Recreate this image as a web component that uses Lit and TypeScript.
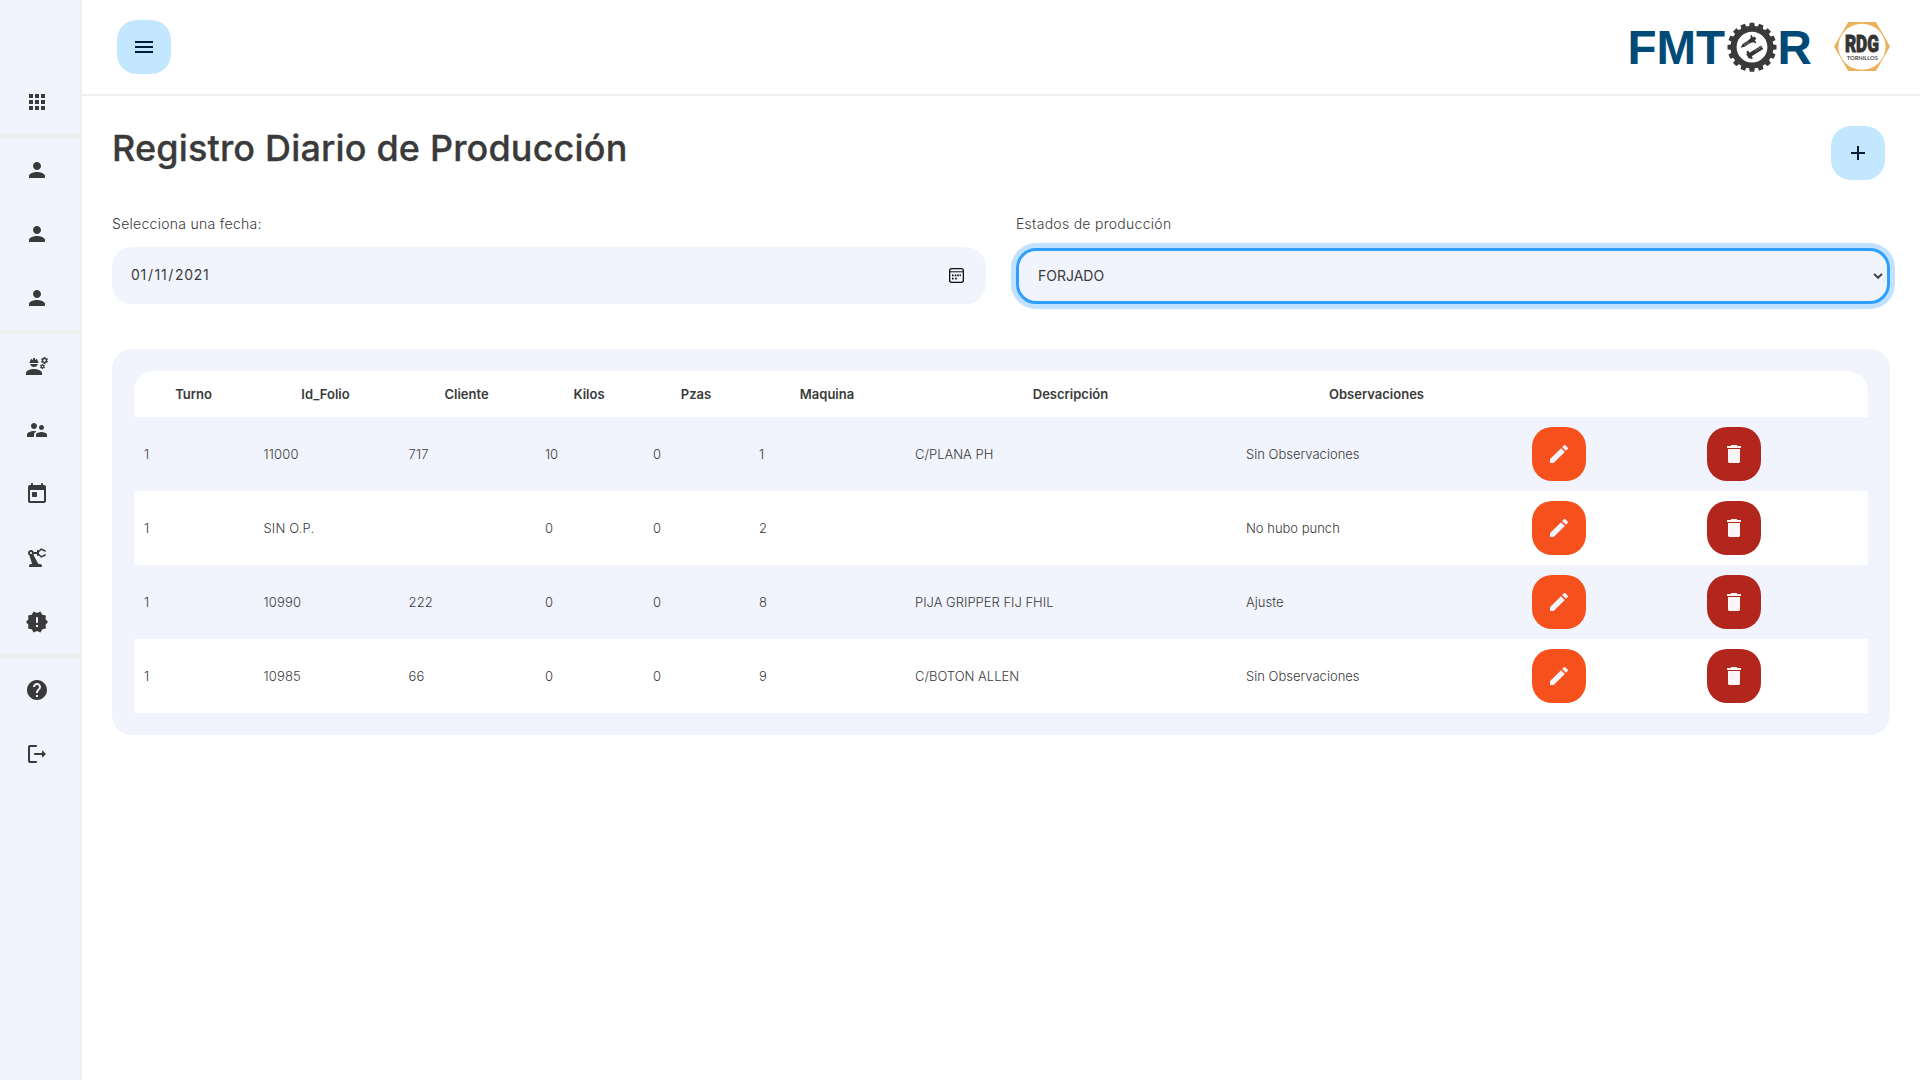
import { LitElement, html, svg, css } from "lit";
import { customElement } from "lit/decorators.js";

const ICONS: Record<string, string> = {
  apps: "M4 8h4V4H4v4zm6 12h4v-4h-4v4zm-6 0h4v-4H4v4zm0-6h4v-4H4v4zm6 0h4v-4h-4v4zm6-10v4h4V4h-4zm-6 4h4V4h-4v4zm6 6h4v-4h-4v4zm0 6h4v-4h-4v4z",
  person:
    "M12 12c2.21 0 4-1.79 4-4s-1.79-4-4-4-4 1.79-4 4 1.79 4 4 4zm0 2c-2.67 0-8 1.34-8 4v1.4c0 .4.2.6.6.6h14.8c.4 0 .6-.2.6-.6V18c0-2.66-5.33-4-8-4z",
  engineering:
    "M9,15c-2.67,0-8,1.34-8,4v2h16v-2C17,16.34,11.67,15,9,15z M22.1,6.84c0.01-0.11,0.02-0.22,0.02-0.34c0-0.12-0.01-0.23-0.03-0.34l0.74-0.58c0.07-0.05,0.08-0.15,0.04-0.22l-0.7-1.21c-0.04-0.08-0.14-0.1-0.21-0.08L21.1,4.42c-0.18-0.14-0.38-0.25-0.59-0.34l-0.13-0.93C20.36,3.06,20.28,3,20.2,3h-1.4c-0.09,0-0.16,0.06-0.17,0.15L18.5,4.08c-0.21,0.09-0.41,0.21-0.59,0.34l-0.87-0.35c-0.08-0.03-0.17,0-0.21,0.08l-0.7,1.21c-0.04,0.08-0.03,0.17,0.04,0.22l0.74,0.58c-0.02,0.11-0.03,0.23-0.03,0.34c0,0.11,0.01,0.23,0.03,0.34l-0.74,0.58c-0.07,0.05-0.08,0.15-0.04,0.22l0.7,1.21c0.04,0.08,0.14,0.1,0.21,0.08l0.87-0.35c0.18,0.14,0.38,0.25,0.59,0.34l0.13,0.93C18.64,9.94,18.71,10,18.8,10h1.4c0.09,0,0.16-0.06,0.17-0.15l0.13-0.93c0.21-0.09,0.41-0.21,0.59-0.34l0.87,0.35c0.08,0.03,0.17,0,0.21-0.08l0.7-1.21c0.04-0.08,0.03-0.17-0.04-0.22L22.1,6.84z M19.5,7.75c-0.69,0-1.25-0.56-1.25-1.25s0.56-1.25,1.25-1.25s1.25,0.56,1.25,1.25S20.19,7.75,19.5,7.75z M19.92,11.68l-0.5-0.87c-0.03-0.06-0.1-0.08-0.15-0.06l-0.62,0.25c-0.13-0.1-0.27-0.18-0.42-0.24l-0.09-0.66C18.12,10.04,18.06,10,18,10h-1c-0.06,0-0.11,0.04-0.12,0.11l-0.09,0.66c-0.15,0.06-0.29,0.15-0.42,0.24l-0.62-0.25c-0.06-0.02-0.12,0-0.15,0.06l-0.5,0.87c-0.03,0.06-0.02,0.12,0.03,0.16l0.53,0.41c-0.01,0.08-0.02,0.16-0.02,0.24c0,0.08,0.01,0.17,0.02,0.24l-0.53,0.41c-0.05,0.04-0.06,0.11-0.03,0.16l0.5,0.87c0.03,0.06,0.1,0.08,0.15,0.06l0.62-0.25c0.13,0.1,0.27,0.18,0.42,0.24l0.09,0.66c0.01,0.07,0.06,0.11,0.12,0.11h1c0.06,0,0.12-0.04,0.12-0.11l0.09-0.66c0.15-0.06,0.29-0.15,0.42-0.24l0.62,0.25c0.06,0.02,0.12,0,0.15-0.06l0.5-0.87c0.03-0.06,0.02-0.12-0.03-0.16l-0.52-0.41c0.01-0.08,0.02-0.16,0.02-0.24c0-0.08-0.01-0.17-0.02-0.24l0.53-0.41C19.93,11.81,19.94,11.74,19.92,11.68z M17.5,13.33c-0.46,0-0.83-0.37-0.83-0.83c0-0.46,0.37-0.83,0.83-0.83c0.46,0,0.83,0.37,0.83,0.83C18.33,12.96,17.96,13.33,17.5,13.33z M4.74,9h8.53c0.27,0,0.49-0.22,0.49-0.49V8.49c0-0.27-0.22-0.49-0.49-0.49H13c0-1.48-0.81-2.75-2-3.45V5.5C11,5.78,10.78,6,10.5,6S10,5.78,10,5.5V4.14C9.68,4.06,9.35,4,9,4S8.32,4.06,8,4.14V5.5C8,5.78,7.78,6,7.5,6S7,5.78,7,5.5V4.55C5.81,5.25,5,6.52,5,8H4.74C4.47,8,4.25,8.22,4.25,8.49v0.03C4.25,8.78,4.47,9,4.74,9z M9,13c1.86,0,3.41-1.28,3.86-3H5.14C5.59,11.72,7.14,13,9,13z",
  supervisor:
    "M16.5 12c1.38 0 2.49-1.12 2.49-2.5S17.88 7 16.5 7C15.12 7 14 8.12 14 9.5s1.12 2.5 2.5 2.5zM9 11c1.66 0 2.99-1.34 2.99-3S10.66 5 9 5C7.34 5 6 6.34 6 8s1.34 3 3 3zm7.5 3c-1.83 0-5.5.92-5.5 2.75V19h11v-2.25c0-1.83-3.67-2.75-5.5-2.75zM9 13c-2.33 0-7 1.17-7 3.5V19h7v-2.25c0-.85.33-2.34 2.37-3.47C10.5 13.1 9.66 13 9 13z",
  today:
    "M19 3h-1V2c0-.55-.45-1-1-1s-1 .45-1 1v1H8V2c0-.55-.45-1-1-1s-1 .45-1 1v1H5c-1.11 0-1.99.9-1.99 2L3 19c0 1.1.89 2 2 2h14c1.1 0 2-.9 2-2V5c0-1.1-.9-2-2-2zm0 16H5V8h14v11zM8 10h3c.55 0 1 .45 1 1v3c0 .55-.45 1-1 1H8c-.55 0-1-.45-1-1v-3c0-.55.45-1 1-1z",
  robot:
    "M19.93,8.35l-3.6,1.68L14,7.7V6.3l2.33-2.33l3.6,1.68c0.38,0.18,0.82,0.01,1-0.36c0.18-0.38,0.01-0.82-0.36-1l-3.92-1.83c-0.38-0.18-0.83-0.1-1.13,0.2L13.78,4.4C13.6,4.16,13.32,4,13,4c-0.55,0-1,0.45-1,1v1H8.82C8.4,4.84,7.3,4,6,4C4.34,4,3,5.34,3,7c0,1.1,0.6,2.05,1.48,2.58L7.08,18H6c-1.1,0-2,0.9-2,2c0,0.55,0.45,1,1,1h11c0.55,0,1-0.45,1-1c0-1.1-0.9-2-2-2h-1.62L8.41,8.77C8.58,8.53,8.72,8.28,8.82,8H12v1c0,0.55,0.45,1,1,1c0.32,0,0.6-0.16,0.78-0.4l1.74,1.74c0.3,0.3,0.75,0.38,1.13,0.2l3.92-1.83c0.38-0.18,0.54-0.62,0.36-1C20.75,8.34,20.31,8.17,19.93,8.35z M6,8C5.45,8,5,7.55,5,7c0-0.55,0.45-1,1-1s1,0.45,1,1C7,7.55,6.55,8,6,8z",
  alert:
    "M23 12l-2.44-2.78.34-3.68-3.61-.82-1.89-3.18L12 3 8.6 1.54 6.71 4.72l-3.61.81.34 3.68L1 12l2.44 2.78-.34 3.69 3.61.82 1.89 3.18L12 21l3.4 1.46 1.89-3.18 3.61-.82-.34-3.68L23 12zm-10 5h-2v-2h2v2zm0-5c0 .55-.45 1-1 1s-1-.45-1-1V8c0-.55.45-1 1-1s1 .45 1 1v4z",
  help: "M12 2C6.48 2 2 6.48 2 12s4.48 10 10 10 10-4.48 10-10S17.52 2 12 2zm1 17h-2v-2h2v2zm2.07-7.75l-.9.92C13.45 12.9 13 13.5 13 15h-2v-.5c0-1.1.45-2.1 1.17-2.83l1.24-1.26c.37-.36.59-.86.59-1.41 0-1.1-.9-2-2-2s-2 .9-2 2H8c0-2.21 1.79-4 4-4s4 1.79 4 4c0 .88-.36 1.68-.93 2.25z",
  logout:
    "M5 5h6c.55 0 1-.45 1-1s-.45-1-1-1H5c-1.1 0-2 .9-2 2v14c0 1.1.9 2 2 2h6c.55 0 1-.45 1-1s-.45-1-1-1H5V5zM20.65 11.65l-2.79-2.79c-.32-.32-.86-.1-.86.35V11h-7c-.55 0-1 .45-1 1s.45 1 1 1h7v1.79c0 .45.54.67.85.35l2.79-2.79c.2-.19.2-.51.01-.7z",
  menu: "M3 18h18v-2H3v2zm0-5h18v-2H3v2zm0-7v2h18V6H3z",
  add: "M19 13h-6v6h-2v-6H5v-2h6V5h2v6h6v2z",
  edit: "M3 17.46v3.04c0 .28.22.5.5.5h3.04c.13 0 .26-.05.35-.15L17.81 9.94l-3.75-3.75L3.15 17.1c-.1.1-.15.22-.15.36zM20.71 7.04c.39-.39.39-1.02 0-1.41l-2.34-2.34c-.39-.39-1.02-.39-1.41 0l-1.83 1.83 3.75 3.75 1.83-1.83z",
  trash:
    "M6 19.6c0 .9.5 1.4 1.4 1.4h9.2c.9 0 1.4-.5 1.4-1.4V7H6v12.6zM19 4h-3.5l-1-1h-5l-1 1H5v2h14V4z",
};

const icon = (name: string) =>
  html`<svg class="icon" viewBox="0 0 24 24"><path d=${ICONS[name]} /></svg>`;

const NAV: string[][] = [
  ["apps"],
  ["person", "person", "person"],
  ["engineering", "supervisor", "today", "robot", "alert"],
  ["help", "logout"],
];

const COLUMNS: [string, number][] = [
  ["Turno", 119],
  ["Id_Folio", 145],
  ["Cliente", 137],
  ["Kilos", 108],
  ["Pzas", 106],
  ["Maquina", 156],
  ["Descripción", 331],
  ["Observaciones", 281],
  ["", 175],
  ["", 176],
];

const ROWS: string[][] = [
  ["1", "11000", "717", "10", "0", "1", "C/PLANA PH", "Sin Observaciones"],
  ["1", "SIN O.P.", "", "0", "0", "2", "", "No hubo punch"],
  ["1", "10990", "222", "0", "0", "8", "PIJA GRIPPER FIJ FHIL", "Ajuste"],
  ["1", "10985", "66", "0", "0", "9", "C/BOTON ALLEN", "Sin Observaciones"],
];

@customElement("brand-logos")
class BrandLogos extends LitElement {
  static styles = css`
    :host { display: block; width: 264px; height: 54px; }
    svg { display: block; }
    .fm { font: bold 47.5px "Liberation Sans", Arial, sans-serif; fill: #004a77; }
    .rdg { font: 900 24.5px Roboto, "Liberation Sans", sans-serif; fill: #333; stroke: #333; stroke-width: 0.9px; }
    .tor { font: 600 6.3px Lato, sans-serif; fill: #333; }
  `;
  render() {
    const teeth = Array.from({ length: 16 }, (_, i) => i * 22.5);
    return html`<svg width="264" height="54" viewBox="1628 20 264 54">
      <text class="fm" x="1627.4" y="64.3">FMT</text>
      <text class="fm" x="1777.4" y="64.3">R</text>
      <g transform="translate(1752 47.2)">
        ${teeth.map(
          (a) => svg`<path d="M-2.9 -20 L-2.3 -24.5 H2.3 L2.9 -20Z" fill="#3a3a3a" transform="rotate(${a})" />`
        )}
        <circle r="18.4" fill="none" stroke="#3a3a3a" stroke-width="6" />
        <g fill="#333" transform="rotate(-32)">
          <path d="M-10 -5.6 L-6 -7.8 H1.5 L4 -8.6 L5 -10.8 H6 V-7.6 H8 V-4.6 H6 V-1.4 H5 L4 -3.4 L1.5 -4.2 H-6Z" />
          <path d="M-8.6 2.6 H-7.2 V.8 H-5 V3.4 H8.6 V7.4 H-5 V9.8 H-7.2 V8.2 H-8.6Z" />
        </g>
        <g stroke="#fff" stroke-width=".35" fill="none" transform="rotate(-32)">
          <path d="M-5.2 -8.2l.8 4.6M-3.2 -8.2l.8 4.6M-1.2 -8.2l.8 4.6M1 3.4l.8 2.4M3 3.4l.8 2.4M5 3.4l.8 2.4M7 3.4l.8 2.4" />
        </g>
      </g>
      <path d="M1834 46.6 L1848.2 22.1 H1876 L1890 46.6 L1876 71.1 H1848.2Z" fill="#ebb15c" />
      <ellipse cx="1862" cy="46.7" rx="23.6" ry="23" fill="#fff" />
      <text class="rdg" transform="translate(1844.9 51.9) scale(.74 1)" textLength="46" lengthAdjust="spacingAndGlyphs">RDG</text>
      <text class="tor" x="1846.8" y="60" textLength="31" lengthAdjust="spacingAndGlyphs">TORNILLOS</text>
    </svg>`;
  }
}

@customElement("app-root")
class AppRoot extends LitElement {
  static styles = css`
    :host {
      display: block;
      height: 1080px;
      overflow: hidden;
      background: #fff;
      color: #3a3a3a;
      font-family: Inter, sans-serif;
    }
    * { box-sizing: border-box; }
    .shell { display: flex; height: 100%; }
    .icon { display: block; width: 24px; height: 24px; fill: currentColor; }
    .sidebar {
      flex: none;
      width: 82px;
      padding-top: 70px;
      background: #f1f4fc;
      border-right: 2px solid #eee;
    }
    .group + .group { border-top: 4px solid #eee; }
    .nav { display: flex; align-items: center; height: 64px; padding-left: 25px; }
    .page { flex: 1; min-width: 0; }
    .topbar {
      display: flex;
      align-items: center;
      justify-content: space-between;
      height: 96px;
      padding: 0 28px 0 35px;
      border-bottom: 2px solid #eee;
    }
    .btn {
      display: flex;
      align-items: center;
      justify-content: center;
      width: 54px;
      height: 54px;
      padding: 0;
      border: 0;
      border-radius: 20px;
    }
    .soft { background: #c2e7ff; color: #001d35; }
    .edit { background: #f6511d; color: #f1f4fc; margin-left: 5px; }
    .del { background: #b3261e; color: #fcf5f5; margin-left: 5px; }
    .content { padding: 30px 30px 0; }
    .heading { display: flex; justify-content: space-between; padding-right: 5px; height: 54px; }
    h1 {
      margin: 0;
      font-size: 36px;
      line-height: 44px;
      font-weight: 500;
      letter-spacing: 0.16px;
      -webkit-text-stroke: 0.3px #3a3a3a;
    }
    .fields { display: grid; grid-template-columns: 1fr 1fr; gap: 30px; margin-top: 34px; }
    .field { display: flex; flex-direction: column; height: 90px; }
    .label { height: 20px; margin-bottom: 13px; font-size: 14px; line-height: 20px; font-weight: 300; letter-spacing: 0.28px; }
    .input {
      display: flex;
      align-items: center;
      justify-content: space-between;
      height: 57px;
      padding: 0 22px 2px 19px;
      border-radius: 20px;
      background: #f1f4fc;
      font-size: 14px;
      letter-spacing: 0.67px;
    }
    .slash { margin: 0 1px; }
    .cal { display: block; width: 15px; height: 15px; margin-top: 2px; }
    .select {
      display: flex;
      align-items: center;
      justify-content: space-between;
      height: 56px;
      margin-top: 1px;
      padding: 0 4px 0 19px;
      border: 3px solid #2e9fff;
      border-radius: 20px;
      box-shadow: 0 0 0 5px #c0e1ff;
      background: #f1f4fc;
      font-size: 14px;
    }
    .value { padding-bottom: 1px; }
    .card { margin-top: 45px; padding: 22px; border-radius: 20px; background: #f1f4fc; }
    table { width: 100%; table-layout: fixed; border-collapse: separate; border-spacing: 0; font-size: 13px; }
    th { height: 46px; padding: 0; background: #fff; font-weight: 600; text-align: center; }
    th:first-child { border-top-left-radius: 20px; }
    th:last-child { border-top-right-radius: 20px; }
    td { height: 74px; padding: 10px; font-weight: 300; vertical-align: middle; white-space: nowrap; }
    td:nth-child(2), td:nth-child(3) { padding-left: 10.5px; letter-spacing: 0.15px; }
    tbody tr:nth-child(even) td { background: #fff; }
  `;

  render() {
    return html`<div class="shell">
      <nav class="sidebar">
        ${NAV.map((g) => html`<div class="group">${g.map((n) => html`<div class="nav">${icon(n)}</div>`)}</div>`)}
      </nav>
      <div class="page">
        <header class="topbar">
          <button class="btn soft">${icon("menu")}</button>
          <brand-logos></brand-logos>
        </header>
        <main class="content">
          <div class="heading">
            <h1>Registro Diario de Producción</h1>
            <button class="btn soft">${icon("add")}</button>
          </div>
          <div class="fields">
            <div class="field">
              <span class="label">Selecciona una fecha:</span>
              <div class="input">
                <span>01<span class="slash">/</span>11<span class="slash">/</span>2021</span>
                <svg class="cal" viewBox="0 0 15 15">
                  <rect x=".65" y=".65" width="13.7" height="13.7" rx="2" fill="none" stroke="#111" stroke-width="1.3" />
                  <path d="M.6 3.8h13.8" stroke="#111" />
                  <path d="M3 6.6h1.6v1.6H3zM5.8 6.6h1.6v1.6H5.8zM8.2 6.6h1.6v1.6H8.2zM10.6 6.6h1.4v1.4h-1.4zM3 9.8h1.6v1.6H3zM6.2 9.8h1.6v1.6H6.2z" fill="#111" />
                </svg>
              </div>
            </div>
            <div class="field">
              <span class="label">Estados de producción</span>
              <div class="select">
                <span class="value">FORJADO</span>
                <svg width="10" height="6" viewBox="0 0 10 6">
                  <path d="M1 .9l4 3.9 4-3.9" fill="none" stroke="#3a3a3a" stroke-width="1.9" />
                </svg>
              </div>
            </div>
          </div>
          <section class="card">
            <table>
              <colgroup>
                ${COLUMNS.map(([, w]) => html`<col style="width:${w}px" />`)}
              </colgroup>
              <thead>
                <tr>${COLUMNS.map(([t]) => html`<th>${t}</th>`)}</tr>
              </thead>
              <tbody>
                ${ROWS.map(
                  (r) => html`<tr>
                    ${r.map((c) => html`<td>${c}</td>`)}
                    <td><button class="btn edit">${icon("edit")}</button></td>
                    <td><button class="btn del">${icon("trash")}</button></td>
                  </tr>`
                )}
              </tbody>
            </table>
          </section>
        </main>
      </div>
    </div>`;
  }
}
